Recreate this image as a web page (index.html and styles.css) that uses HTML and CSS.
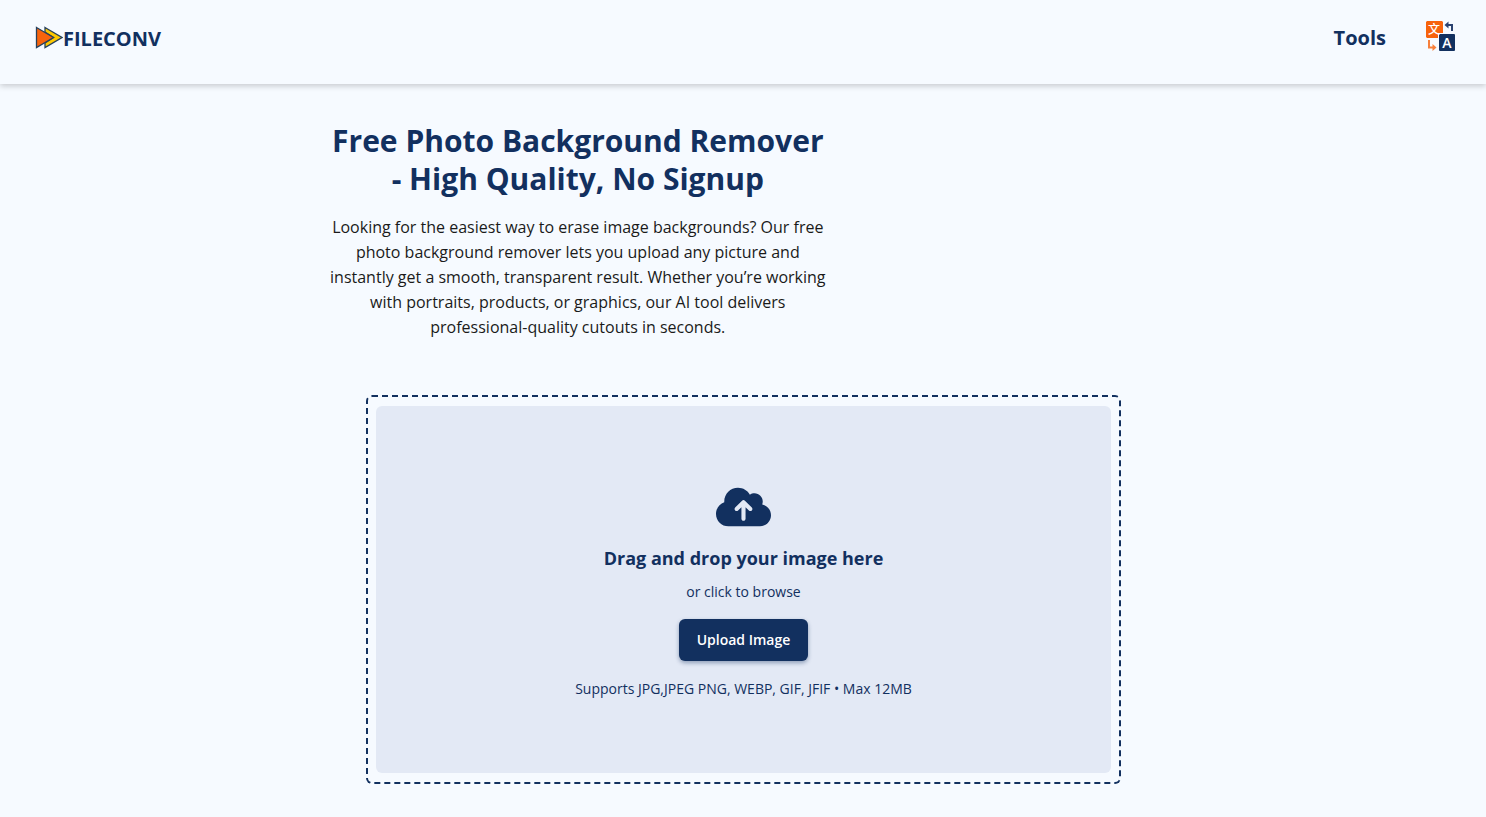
FILE: index.html
```html
<!DOCTYPE html>
<html lang="en">
<head>
    <meta charset="UTF-8">
    <meta name="viewport" content="width=device-width, initial-scale=1.0">
    <title>Free Photo Background Remover</title>
    <link rel="stylesheet" href="styles.css">
</head>
<body>
    <header class="header">
        <a href="#" class="logo">
            <svg class="logo-icon" viewBox="0 0 28 24" aria-hidden="true">
                <path d="M10 1.5 L27 11.5 L10 21.5 L10 17 L18.5 11.5 L10 6 Z" fill="#fdc800" stroke="#26405c" stroke-width="1.3"/>
                <path d="M1.5 1.5 L18.5 11.5 L1.5 21.5 Z" fill="#f7630c" stroke="#26405c" stroke-width="1.3"/>
            </svg>
            <span>FILECONV</span>
        </a>
        <nav class="nav">
            <a href="#" class="nav-link">Tools</a>
            <button type="button" class="lang-btn" aria-label="Change language">
                <svg class="lang-icon" viewBox="0 0 30 30" aria-hidden="true">
                    <path d="M1 0 H16 L17 1 V12 H12 V17 H1 L0 16 V1 Z" fill="#f7630c"/>
                    <rect x="13" y="13" width="16" height="17" rx="1" fill="#12305f"/>
                    <text x="8" y="13" class="lang-han">文</text>
                    <text x="21" y="27" class="lang-latin">A</text>
                    <path d="M26 10 V4 H21" fill="none" stroke="#2b4270" stroke-width="2"/>
                    <path d="M22.5 0.5 L18.5 4 L22.5 7.5 Z" fill="#2b4270"/>
                    <path d="M3 19 V26.5 H8" fill="none" stroke="#f7803c" stroke-width="2"/>
                    <path d="M6.5 23 L10.5 26.5 L6.5 30 Z" fill="#f7803c"/>
                </svg>
            </button>
        </nav>
    </header>

    <main class="container">
        <section class="intro">
            <h1>Free Photo Background Remover - High Quality, No Signup</h1>
            <p>Looking for the easiest way to erase image backgrounds? Our free photo background remover lets you upload any picture and instantly get a smooth, transparent result. Whether you’re working with portraits, products, or graphics, our AI tool delivers professional-quality cutouts in seconds.</p>
        </section>

        <section class="upload-box">
            <div class="upload-area">
                <svg class="upload-icon" viewBox="0 0 640 512" aria-hidden="true">
                    <path fill="currentColor" d="M144 480C64.5 480 0 415.5 0 336c0-62.8 40.2-116.2 96.2-135.9c-.1-2.7-.2-5.4-.2-8.1c0-88.4 71.6-160 160-160c59.3 0 111 32.2 138.7 80.2C409.9 102 428.3 96 448 96c53 0 96 43 96 96c0 12.2-2.3 23.8-6.4 34.6C596 238.4 640 290.1 640 352c0 70.7-57.3 128-128 128H144zm79-217c-9.4 9.4-9.4 24.6 0 33.9s24.6 9.4 33.9 0l39-39V392c0 13.3 10.7 24 24 24s24-10.7 24-24V257.9l39 39c9.4 9.4 24.6 9.4 33.9 0s9.4-24.6 0-33.9l-80-80c-9.4-9.4-24.6-9.4-33.9 0l-80 80z"/>
                </svg>
                <h2>Drag and drop your image here</h2>
                <p class="browse">or click to browse</p>
                <button type="button" class="upload-btn">Upload Image</button>
                <p class="formats">Supports JPG,JPEG PNG, WEBP, GIF, JFIF • Max 12MB</p>
            </div>
        </section>
    </main>
</body>
</html>
```
FILE: styles.css
```css
* {
    box-sizing: border-box;
}
body {
    margin: 0;
    font-family: "Segoe UI", "Open Sans", "Noto Sans", sans-serif;
    background-color: #f6faff;
    color: #12305f;
}
h1, h2, p {
    margin: 0;
}
a {
    color: inherit;
    text-decoration: none;
}
button {
    font-family: inherit;
    cursor: pointer;
}

/* Header */
.header {
    display: flex;
    justify-content: space-between;
    align-items: center;
    height: 84px;
    padding: 0 30px 8px 35px;
    box-shadow: 0 2px 6px rgba(0, 0, 0, 0.2);
}
.logo {
    display: flex;
    align-items: center;
    font-size: 20px;
    font-weight: 700;
}
.logo-icon {
    width: 28px;
    height: 24px;
}
.nav {
    display: flex;
    align-items: flex-start;
    gap: 40px;
}
.nav-link {
    font-size: 20px;
    font-weight: 700;
    line-height: 34px;
}
.lang-btn {
    display: flex;
    padding: 0;
    border: none;
    background: none;
}
.lang-icon {
    width: 30px;
    height: 30px;
    overflow: visible;
}
.lang-han,
.lang-latin {
    fill: #fff;
    text-anchor: middle;
}
.lang-han {
    font-family: "Noto Sans CJK SC", sans-serif;
    font-size: 12px;
    font-weight: 500;
}
.lang-latin {
    font-size: 14px;
    font-weight: 600;
}

/* Page */
.container {
    max-width: 826px;
    margin: 0 auto;
    padding-top: 38px;
}
.intro {
    width: 60%;
    text-align: center;
}
.intro h1 {
    font-size: 30px;
    font-weight: 700;
    line-height: 38px;
}
.intro p {
    margin-top: 17px;
    font-size: 16px;
    line-height: 25px;
    color: #1a1a1a;
}

/* Upload */
.upload-box {
    margin: 55px 35px 32px 36px;
    padding: 9px 8px;
    border: 2px dashed #12305f;
    border-radius: 6px;
}
.upload-area {
    display: flex;
    flex-direction: column;
    align-items: center;
    padding: 79px 20px 73px;
    border-radius: 6px;
    background-color: #e3e9f5;
}
.upload-icon {
    width: 55px;
    height: 44px;
}
.upload-area h2 {
    margin-top: 16px;
    font-size: 18px;
    font-weight: 700;
    line-height: 26px;
}
.browse,
.formats {
    font-size: 14px;
    line-height: 22px;
}
.browse {
    margin-top: 10px;
}
.formats {
    margin-top: 17px;
}
.upload-btn {
    margin-top: 16px;
    padding: 10px 18px;
    border: none;
    border-radius: 6px;
    background-color: #12305f;
    box-shadow: 0 2px 4px rgba(18, 48, 95, 0.4);
    color: #fff;
    font-size: 14px;
    font-weight: 600;
    line-height: 22px;
}
```
